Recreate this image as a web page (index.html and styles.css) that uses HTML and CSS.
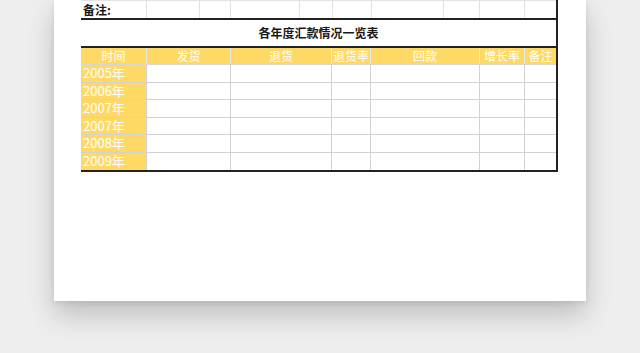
FILE: index.html
```html
<!DOCTYPE html>
<html lang="zh">
<head>
<meta charset="utf-8">
<link rel="stylesheet" href="styles.css">
</head>
<body>
<div class="paper">
  <div class="sheet">
    <div class="row top-row">
      <div class="cell label">备注:</div>
      <div class="cell"></div><div class="cell"></div><div class="cell"></div><div class="cell"></div>
      <div class="cell"></div><div class="cell"></div><div class="cell"></div><div class="cell"></div>
      <div class="cell"></div>
    </div>
    <div class="title">各年度汇款情况一览表</div>
    <div class="row head">
      <div class="cell">时间</div>
      <div class="cell">发货</div>
      <div class="cell">退货</div>
      <div class="cell">退货率</div>
      <div class="cell">回款</div>
      <div class="cell">增长率</div>
      <div class="cell">备注</div>
    </div>
    <div class="row data"><div class="cell year">2005年</div><div class="cell"></div><div class="cell"></div><div class="cell"></div><div class="cell"></div><div class="cell"></div><div class="cell"></div></div>
    <div class="row data"><div class="cell year">2006年</div><div class="cell"></div><div class="cell"></div><div class="cell"></div><div class="cell"></div><div class="cell"></div><div class="cell"></div></div>
    <div class="row data"><div class="cell year">2007年</div><div class="cell"></div><div class="cell"></div><div class="cell"></div><div class="cell"></div><div class="cell"></div><div class="cell"></div></div>
    <div class="row data"><div class="cell year">2007年</div><div class="cell"></div><div class="cell"></div><div class="cell"></div><div class="cell"></div><div class="cell"></div><div class="cell"></div></div>
    <div class="row data"><div class="cell year">2008年</div><div class="cell"></div><div class="cell"></div><div class="cell"></div><div class="cell"></div><div class="cell"></div><div class="cell"></div></div>
    <div class="row data last"><div class="cell year">2009年</div><div class="cell"></div><div class="cell"></div><div class="cell"></div><div class="cell"></div><div class="cell"></div><div class="cell"></div></div>
  </div>
</div>
</body>
</html>
```

FILE: styles.css
```css
html, body {
  margin: 0;
  padding: 0;
  background: #eeeeee;
  font-family: "Noto Sans CJK SC", "Noto Sans", sans-serif;
}

body {
  height: 353px;
}

.paper {
  margin-left: 54px;
  width: 532px;
  height: 301px;
  background: #ffffff;
  box-shadow: 0 14px 26px rgba(0, 0, 0, 0.2), 0 2px 6px rgba(0, 0, 0, 0.08);
  padding-left: 27px;
  box-sizing: border-box;
}

.sheet {
  width: 477px;
  border-right: 2px solid #222222;
  box-sizing: border-box;
}

.row {
  display: grid;
}

.cell {
  box-sizing: border-box;
  border-right: 1px solid #d2d2d2;
  white-space: nowrap;
}

.cell:last-child {
  border-right: none;
}

.top-row {
  grid-template-columns: 66px 53px 31px 69px 33px 39px 72px 36px 45px 31px;
  height: 18px;
  border-top: 1px solid #e2e2e2;
  box-sizing: border-box;
}

.top-row .cell {
  border-right-color: #e2e2e2;
}

.label {
  font-size: 12px;
  font-weight: 700;
  color: #1a1a1a;
  line-height: 17px;
  padding-left: 2px;
}

.title {
  height: 26px;
  border-top: 2px solid #222222;
  border-bottom: 2px solid #222222;
  text-align: center;
  font-size: 12px;
  font-weight: 700;
  color: #1a1a1a;
  line-height: 26px;
}

.head,
.data {
  grid-template-columns: 66px 84px 101px 39px 109px 45px 31px;
}

.head {
  height: 16px;
  background: #ffd966;
  border-bottom: 1px solid #d6d6d6;
}

.head .cell {
  color: #ffffff;
  font-size: 12px;
  line-height: 15px;
  text-align: center;
  border-right-color: #e8e8e8;
}

.data {
  height: 17.6px;
  border-bottom: 1px solid #d2d2d2;
  box-sizing: border-box;
}

.data.last {
  height: 16.6px;
  border-bottom: 2px solid #222222;
  box-sizing: content-box;
}

.year {
  background: #ffd966;
  color: #ffffff;
  font-size: 13px;
  line-height: 16.6px;
  padding-left: 2px;
}
```
